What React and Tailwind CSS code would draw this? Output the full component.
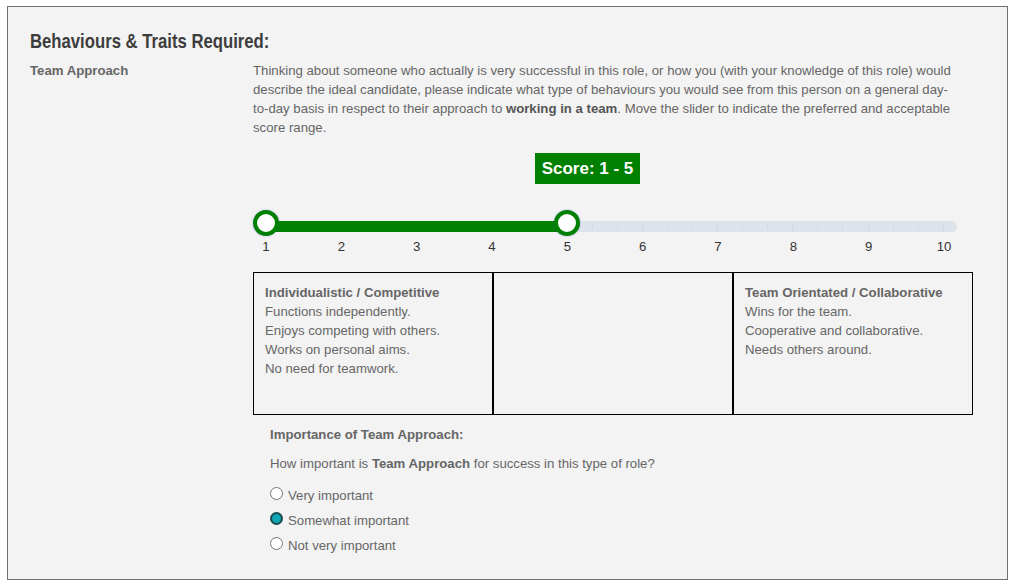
import React, { useState } from 'react';

const BODY = { fontFamily: '"Liberation Sans", Arial, sans-serif' };

const traitColumns = [
  {
    title: 'Individualistic / Competitive',
    lines: ['Functions independently.', 'Enjoys competing with others.', 'Works on personal aims.', 'No need for teamwork.'],
  },
  { title: '', lines: [] },
  {
    title: 'Team Orientated / Collaborative',
    lines: ['Wins for the team.', 'Cooperative and collaborative.', 'Needs others around.'],
  },
];

const importanceOptions = ['Very important', 'Somewhat important', 'Not very important'];

// Range slider: 1..10, drawn track with two handles
const RangeSlider = ({ low, high }) => {
  const pct = (v) => ((v - 1) / 9) * 100;
  return (
    <div className="w-[704px]">
      <div className="relative h-[26px] pt-[11px]">
        <div className="h-[11px] rounded-full bg-[#dde3ea]"></div>
        {/* minor ticks */}
        <div className="absolute left-[13px] right-[13px] top-[11px] h-[11px] flex justify-between">
          {[...Array(28)].map((_, i) => (
            <div key={i} className={`w-px bg-[#d3d9e0] ${i % 3 === 0 ? 'h-[9px] mt-[2px]' : 'h-[5px] mt-[3px]'}`}></div>
          ))}
        </div>
        <div className="absolute left-[13px] right-[13px] top-0 h-[26px]">
          <div
            className="absolute top-[11px] h-[11px] bg-[#008000]"
            style={{ left: `${pct(low)}%`, width: `${pct(high) - pct(low)}%` }}
          ></div>
          {[low, high].map((v) => (
            <div
              key={v}
              className="absolute top-0 w-[26px] h-[26px] -ml-[13px] rounded-full bg-white border-[4px] border-[#008000] shadow-[0_0_2px_rgba(80,80,220,0.5)]"
              style={{ left: `${pct(v)}%` }}
            ></div>
          ))}
        </div>
      </div>
      <div className="mt-[3px] px-[13px] flex justify-between text-[13.2px] leading-[15px] text-[#333]">
        {[1, 2, 3, 4, 5, 6, 7, 8, 9, 10].map((n) => (
          <div key={n} className="w-0 flex justify-center">
            <span>{n}</span>
          </div>
        ))}
      </div>
    </div>
  );
};

const App = () => {
  const [importance, setImportance] = useState('Somewhat important');

  return (
    <div className="min-h-screen bg-white pt-[6px] pl-[7px]" style={BODY}>
      <div className="w-[1001px] h-[574px] border border-[#707070] bg-[#f3f3f3] pt-[22px] pl-[22px]">
        <h2 className="h-[24px] text-[21px] leading-[24px] font-bold text-[#3d3d3d] whitespace-nowrap">
          <span className="inline-block origin-left scale-x-[0.795]">Behaviours &amp; Traits Required:</span>
        </h2>

        <div className="flex mt-[8px]">
          <div className="w-[223px] text-[13.2px] leading-[19px] font-bold text-[#666]">Team Approach</div>

          <div className="w-[720px]">
            <p className="w-[704px] text-[13.2px] leading-[19px] text-[#666]">
              Thinking about someone who actually is very successful in this role, or how you (with your knowledge of this role) would
              describe the ideal candidate, please indicate what type of behaviours you would see from this person on a general day-to-day basis in respect to their approach to{' '}
              <span className="font-bold text-[#555]">working in a team</span>. Move the slider to indicate the preferred and acceptable
              score range.
            </p>

            {/* Score badge */}
            <div className="mt-[16px] ml-[282px] w-[105px] h-[31px] bg-[#008000] text-white font-bold text-[17px] flex items-center justify-center">
              Score: 1 - 5
            </div>

            <div className="mt-[26px]">
              <RangeSlider low={1} high={5} />
            </div>

            {/* Trait description boxes */}
            <div className="mt-[18px] flex h-[143px]">
              {traitColumns.map((col, i) => (
                <div key={i} className="w-[240px] border border-black pl-[11px] pt-[10px] text-[13.2px] leading-[19px] text-[#666]">
                  {col.title && <div className="font-bold">{col.title}</div>}
                  {col.lines.map((l) => (
                    <div key={l}>{l}</div>
                  ))}
                </div>
              ))}
            </div>

            {/* Importance */}
            <div className="pl-[17px] text-[13.2px] leading-[19px] text-[#666]">
              <div className="mt-[10px] font-bold">Importance of Team Approach:</div>
              <div className="mt-[10px]">
                How important is <span className="font-bold">Team Approach</span> for success in this type of role?
              </div>
              <div className="mt-[10px] flex flex-col">
                {importanceOptions.map((opt) => {
                  const checked = importance === opt;
                  return (
                    <label key={opt} className="h-[25px] flex items-center cursor-pointer" onClick={() => setImportance(opt)}>
                      <span
                        className={`w-[13px] h-[13px] rounded-full mb-[4px] ${
                          checked ? 'bg-[#0fa7b3] border-2 border-[#184a4f]' : 'bg-white border border-[#767676]'
                        }`}
                      ></span>
                      <span className="ml-[5px]">{opt}</span>
                    </label>
                  );
                })}
              </div>
            </div>
          </div>
        </div>
      </div>
    </div>
  );
};

export default App;
